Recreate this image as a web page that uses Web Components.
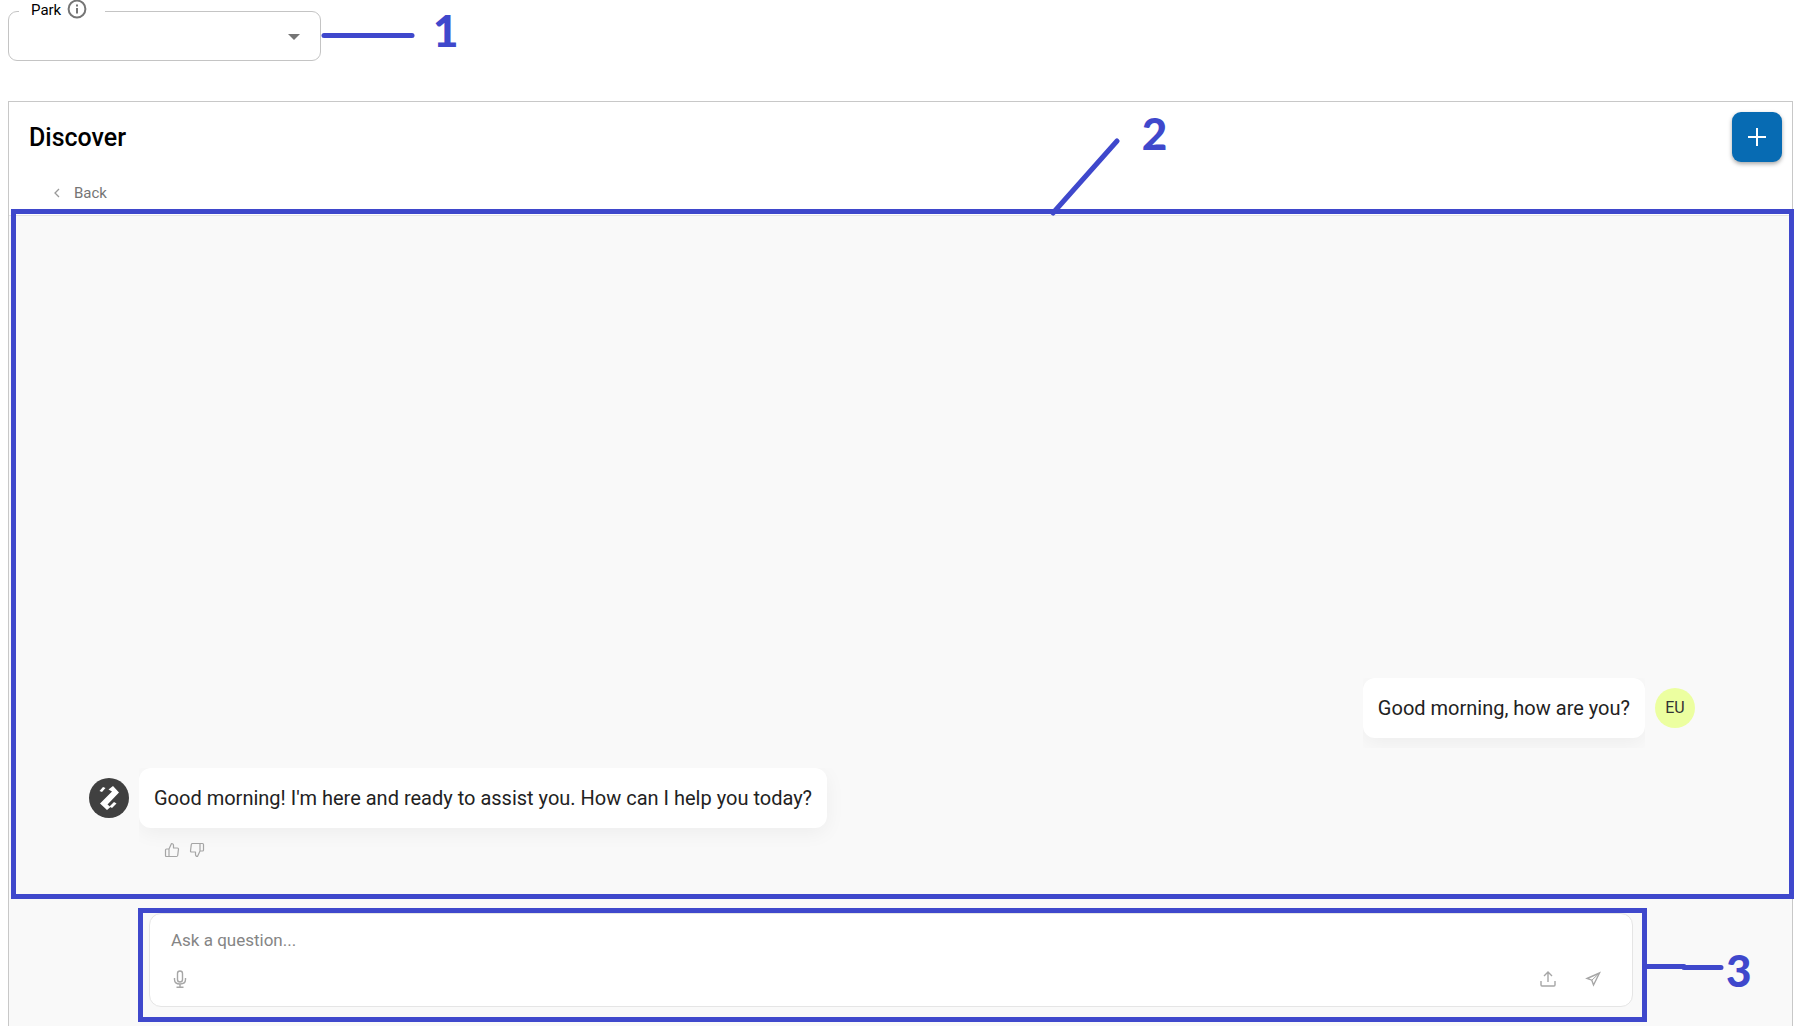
<!DOCTYPE html>
<html lang="en">
<head>
<meta charset="utf-8">
<meta name="viewport" content="width=device-width, initial-scale=1">
<title>Discover</title>
<style>
  :root {
    --callout: #3f48cc;
    --line: #c8c8c8;
    --soft-line: #e5e5e5;
    --surface: #f9f9f9;
    --muted: #757575;
    --icon: #a6a6a6;
  }

  * {
    box-sizing: border-box;
  }

  body {
    margin: 0;
    padding: 0 8px;
    min-height: 100vh;
    display: flex;
    flex-direction: column;
    gap: 40px;
    background: #fff;
    color: #000;
    font-family: Roboto, "Liberation Sans", sans-serif;
    overflow-x: hidden;
  }
</style>
</head>
<body>
  <park-select label="Park"></park-select>

  <discover-panel heading="Discover">
    <chat-log>
      <chat-message from="user" initials="EU">Good morning, how are you?</chat-message>
      <chat-message from="bot">Good morning! I'm here and ready to assist you. How can I help you today?</chat-message>
    </chat-log>
    <chat-composer placeholder="Ask a question..."></chat-composer>
  </discover-panel>

<script>
class CalloutMark extends HTMLElement {
  constructor() {
    super();
    this.attachShadow({ mode: "open" });
  }

  connectedCallback() {
    const width = this.getAttribute("width");
    const height = this.getAttribute("height");
    const points = this.getAttribute("points");

    this.shadowRoot.innerHTML = `
      <style>
        :host {
          position: absolute;
          display: flex;
          align-items: flex-start;
          gap: var(--callout-gap, 20px);
          color: var(--callout);
          pointer-events: none;
        }

        svg {
          display: block;
          flex: none;
        }

        span {
          font: 900 44px/38px Lato, "Open Sans", sans-serif;
        }
      </style>

      <svg width="${width}" height="${height}" fill="none" stroke="currentColor" stroke-width="5" stroke-linecap="round" stroke-linejoin="round" aria-hidden="true">
        <polyline points="${points}" />
      </svg>
      <span><slot></slot></span>
    `;
  }
}

class ParkSelect extends HTMLElement {
  constructor() {
    super();
    this.attachShadow({ mode: "open" });
  }

  connectedCallback() {
    const label = this.getAttribute("label") || "";

    this.shadowRoot.innerHTML = `
      <style>
        :host {
          display: block;
          position: relative;
          width: 313px;
        }

        fieldset {
          margin: 0;
          padding: 0 0 0 10px;
          min-width: 0;
          border: 1px solid #c4c4c4;
          border-radius: 9px;
        }

        legend {
          display: flex;
          gap: 6px;
          height: 22px;
          padding: 0 18px 0 12px;
          font-size: 15px;
          line-height: 20px;
        }

        legend svg {
          color: var(--muted);
        }

        .field {
          display: grid;
          align-items: start;
        }

        .field > * {
          grid-area: 1 / 1;
        }

        select {
          appearance: none;
          width: 100%;
          height: 38px;
          padding: 0 40px 0 10px;
          border: 0;
          outline: 0;
          background: none;
          font: inherit;
        }

        .arrow {
          justify-self: end;
          margin: 12px 20px 0 0;
          fill: var(--muted);
          pointer-events: none;
        }

        callout-mark {
          left: 100%;
          top: 11px;
          --callout-gap: 18px;
        }
      </style>

      <fieldset>
        <legend>
          <label for="park">${label}</label>
          <svg width="20" height="19" viewBox="0 0 20 19" fill="none" stroke="currentColor" stroke-width="2" aria-hidden="true">
            <circle cx="10" cy="9" r="8.4" />
            <path d="M10 8v5.500M10 4.500v2" />
          </svg>
        </legend>
        <div class="field">
          <select id="park"><option value=""></option></select>
          <svg class="arrow" width="12" height="6" viewBox="0 0 12 6" aria-hidden="true"><path d="M0 0h12L6 6z" /></svg>
        </div>
      </fieldset>
      <callout-mark width="94" height="40" points="3,24.500 91,24.500">1</callout-mark>
    `;
  }
}

class DiscoverPanel extends HTMLElement {
  constructor() {
    super();
    this.attachShadow({ mode: "open" });
  }

  connectedCallback() {
    const heading = this.getAttribute("heading") || "";

    this.shadowRoot.innerHTML = `
      <style>
        :host {
          flex: 1;
          display: flex;
          flex-direction: column;
          border: 1px solid var(--line);
          border-bottom: 0;
        }

        header {
          display: flex;
          align-items: center;
          justify-content: space-between;
          padding: 10px 10px 0 20px;
        }

        h1 {
          margin: 0;
          padding-top: 2px;
          font-size: 25px;
          font-weight: 500;
          line-height: 32px;
        }

        .add {
          display: grid;
          place-items: center;
          width: 50px;
          height: 50px;
          padding: 0;
          border: 0;
          border-radius: 9px;
          background: #076bb3;
          color: #fff;
          box-shadow: 0 2px 4px rgb(0 0 0 / 0.35);
        }

        nav {
          padding: 21px 44px 12px;
        }

        .back {
          display: flex;
          align-items: center;
          gap: 14px;
          padding: 0;
          border: 0;
          background: none;
          color: var(--muted);
          font: 400 15px/20px Roboto, sans-serif;
        }

        main {
          flex: 1;
          display: flex;
          flex-direction: column;
          border-top: 1px solid var(--soft-line);
          background: var(--surface);
        }
      </style>

      <header>
        <h1>${heading}</h1>
        <button class="add" type="button" aria-label="New chat">
          <svg width="18" height="18" viewBox="0 0 18 18" stroke="currentColor" stroke-width="2" aria-hidden="true"><path d="M9 0v18M0 9h18" /></svg>
        </button>
      </header>
      <nav>
        <button class="back" type="button">
          <svg width="7" height="10" viewBox="0 0 7 10" fill="none" stroke="#999" stroke-width="1.300" aria-hidden="true"><path d="M6 1L2 5l4 4" /></svg>
          Back
        </button>
      </nav>
      <main><slot></slot></main>
    `;
  }
}

class ChatLog extends HTMLElement {
  constructor() {
    super();
    this.attachShadow({ mode: "open" });
  }

  connectedCallback() {
    this.shadowRoot.innerHTML = `
      <style>
        :host {
          position: relative;
          flex: 1;
          display: flex;
          flex-direction: column;
          justify-content: flex-end;
          gap: 30px;
          padding: 30px 97px 41px 80px;
        }

        .frame {
          position: absolute;
          inset: -7px -2px 0 2px;
          border: 5px solid var(--callout);
          pointer-events: none;
        }

        callout-mark {
          left: 58.3%;
          top: -100px;
          --callout-gap: 22px;
        }
      </style>

      <slot></slot>
      <div class="frame">
        <callout-mark width="70" height="104" points="3,99 67,27">2</callout-mark>
      </div>
    `;
  }
}

class ChatMessage extends HTMLElement {
  constructor() {
    super();
    this.attachShadow({ mode: "open" });
  }

  connectedCallback() {
    const isBot = this.getAttribute("from") === "bot";
    const initials = this.getAttribute("initials") || "";

    const logo = `
      <svg width="40" height="40" viewBox="0 0 40 40" fill="#fff" aria-hidden="true">
        <path d="M24 8L30 14.500 18.500 26.500 21.500 29 18 32 11 25.500 23 13.500 19.500 11.500z" />
        <path d="M10.500 13L14 9l2.500 1L13 14z" />
        <path d="M20.500 28.500L25 24l2.500 1.500L23 30z" />
      </svg>`;

    const feedback = `
      <div class="feedback">
        <button type="button" aria-label="Good answer">
          <svg width="16" height="16" viewBox="0 0 16 16" aria-hidden="true"><path d="M5 7l2.500-5.500c1.500 0 2 1 2 2V6h4q1 0 1 1l-.8 6.500q-.2 1-1.200 1H2.500q-1 0-1-1V8q0-1 1-1zM5 7v7.500" /></svg>
        </button>
        <button type="button" aria-label="Bad answer">
          <svg width="16" height="16" viewBox="0 0 16 16" aria-hidden="true"><path d="M11 9l-2.500 5.500c-1.500 0-2-1-2-2V10h-4q-1 0-1-1l.8-6.500q.2-1 1.200-1h10q1 0 1 1V8q0 1-1 1zM11 9V1.500" /></svg>
        </button>
      </div>`;

    this.shadowRoot.innerHTML = `
      <style>
        :host {
          display: block;
        }

        .row {
          display: flex;
          align-items: center;
          gap: 10px;
        }

        :host([from="user"]) .row {
          flex-direction: row-reverse;
        }

        .avatar {
          display: grid;
          place-items: center;
          flex: none;
          width: 40px;
          height: 40px;
          border-radius: 50%;
          background: #ecffa0;
          color: #333;
          font-size: 16px;
          line-height: 20px;
        }

        :host([from="bot"]) .avatar {
          background: #404040;
        }

        p {
          margin: 0;
          padding: 15px;
          border-radius: 12px;
          background: #fff;
          color: #222;
          font-size: 20px;
          line-height: 30px;
          box-shadow: 0 5px 20px rgb(0 0 0 / 0.05);
          clip-path: inset(0 0 -10px 0);
        }

        :host([from="bot"]) p {
          clip-path: inset(0 -20px -24px 0);
        }

        .feedback {
          display: flex;
          gap: 9px;
          padding: 14px 0 0 75px;
        }

        .feedback button {
          padding: 0;
          border: 0;
          background: none;
        }

        .feedback svg {
          display: block;
          fill: none;
          stroke: var(--icon);
          stroke-width: 1.2;
          stroke-linejoin: round;
        }
      </style>

      <div class="row">
        <div class="avatar">${isBot ? logo : initials}</div>
        <p><slot></slot></p>
      </div>
      ${isBot ? feedback : ""}
    `;
  }
}

class ChatComposer extends HTMLElement {
  constructor() {
    super();
    this.attachShadow({ mode: "open" });
  }

  connectedCallback() {
    const placeholder = this.getAttribute("placeholder") || "";

    this.shadowRoot.innerHTML = `
      <style>
        :host {
          display: block;
          padding: 14px 159px 19px 140px;
        }

        form {
          position: relative;
          display: flex;
          flex-direction: column;
          gap: 17px;
          margin: 0;
          padding: 14px 29px 17px 20px;
          border: 1px solid var(--soft-line);
          border-radius: 12px;
          background: #fff;
        }

        textarea {
          display: block;
          width: 100%;
          height: 24px;
          padding: 0 1px;
          border: 0;
          outline: 0;
          resize: none;
          overflow: hidden;
          background: none;
          font: 400 17px/24px Roboto, sans-serif;
        }

        textarea::placeholder {
          color: #858585;
        }

        .tools {
          display: flex;
          align-items: center;
          gap: 25px;
        }

        .tools button {
          padding: 0;
          border: 0;
          background: none;
        }

        .tools button:first-child {
          margin-right: auto;
        }

        .tools svg {
          display: block;
          fill: none;
          stroke: var(--icon);
          stroke-width: 1.4;
        }

        .frame {
          position: absolute;
          inset: -6px -15px -16px -12px;
          border: 5px solid var(--callout);
          pointer-events: none;
        }

        callout-mark {
          left: 100%;
          top: 38px;
          --callout-gap: 2px;
        }
      </style>

      <form>
        <textarea rows="1" aria-label="${placeholder}" placeholder="${placeholder}"></textarea>
        <div class="tools">
          <button type="button" aria-label="Record voice">
            <svg width="20" height="20" viewBox="0 0 20 20" aria-hidden="true"><rect x="7.500" y="2" width="5" height="11" rx="2.500" /><path d="M4.500 9v1.500q0 4.500 5.500 4.500t5.500-4.500V9M10 15v3.200M6.500 18.300h7" /></svg>
          </button>
          <button type="button" aria-label="Upload file">
            <svg width="20" height="20" viewBox="0 0 20 20" aria-hidden="true"><path d="M3 12v4q0 1 1 1h12q1 0 1-1v-4M10 13V3.500M6 7l4-4 4 4" /></svg>
          </button>
          <button type="button" aria-label="Send">
            <svg width="20" height="20" viewBox="0 0 20 20" aria-hidden="true"><path d="M16.500 4L4 9.500l4.800 1.700L10.500 16z" /><path d="M16.500 4L8.800 11.200" stroke-width="1" /></svg>
          </button>
        </div>
        <div class="frame">
          <callout-mark width="82" height="40" points="3,15.500 42,15.500 42,16.500 79,16.500">3</callout-mark>
        </div>
      </form>
    `;
  }
}

customElements.define("callout-mark", CalloutMark);
customElements.define("park-select", ParkSelect);
customElements.define("discover-panel", DiscoverPanel);
customElements.define("chat-log", ChatLog);
customElements.define("chat-message", ChatMessage);
customElements.define("chat-composer", ChatComposer);
</script>
</body>
</html>
